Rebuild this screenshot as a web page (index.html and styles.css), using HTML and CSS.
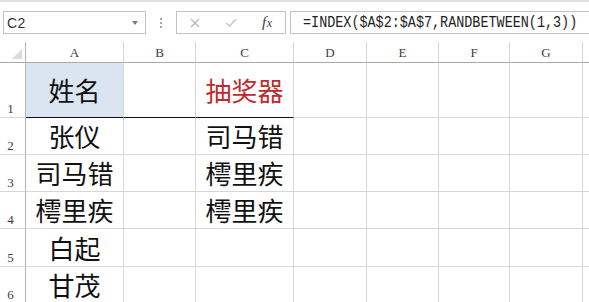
FILE: index.html
```html
<!DOCTYPE html>
<html lang="zh">
<head>
<meta charset="utf-8">
<title>Excel</title>
<link rel="stylesheet" href="styles.css">
</head>
<body>
<div class="app">
  <div class="topline"></div>
  <div class="fbar">
    <div class="namebox">
      <span class="name">C2</span>
      <span class="caret"></span>
    </div>
    <div class="grip"><i></i><i></i><i></i></div>
    <div class="fxbtns">
      <span class="btn">
        <svg width="10" height="10" viewBox="0 0 10 10"><path d="M1 1L9 9M9 1L1 9" stroke="#b9b9b9" stroke-width="1.4" fill="none"/></svg>
      </span>
      <span class="btn">
        <svg width="12" height="9" viewBox="0 0 12 9"><path d="M1 5L4.5 8L11 1" stroke="#c9c9c9" stroke-width="1.6" fill="none"/></svg>
      </span>
      <span class="btn fx"><span class="f">f</span><span class="x">x</span></span>
    </div>
    <div class="formula"><span class="ftext">=INDEX($A$2:$A$7,RANDBETWEEN(1,3))</span></div>
  </div>

  <div class="sheet">
    <div class="corner"><svg width="10" height="10" viewBox="0 0 10 10"><path d="M10 0L10 10L0 10Z" fill="#dcdcdc"/></svg></div>
    <div class="colh">A</div><div class="colh">B</div><div class="colh">C</div><div class="colh">D</div><div class="colh">E</div><div class="colh">F</div><div class="colh">G</div><div class="colh last"></div>

    <div class="rowh">1</div>
    <div class="cell head-a thick">姓名</div><div class="cell thick"></div><div class="cell thick red">抽奖器</div><div class="cell"></div><div class="cell"></div><div class="cell"></div><div class="cell"></div><div class="cell last"></div>

    <div class="rowh">2</div>
    <div class="cell">张仪</div><div class="cell"></div><div class="cell">司马错</div><div class="cell"></div><div class="cell"></div><div class="cell"></div><div class="cell"></div><div class="cell last"></div>

    <div class="rowh">3</div>
    <div class="cell">司马错</div><div class="cell"></div><div class="cell">樗里疾</div><div class="cell"></div><div class="cell"></div><div class="cell"></div><div class="cell"></div><div class="cell last"></div>

    <div class="rowh">4</div>
    <div class="cell">樗里疾</div><div class="cell"></div><div class="cell">樗里疾</div><div class="cell"></div><div class="cell"></div><div class="cell"></div><div class="cell"></div><div class="cell last"></div>

    <div class="rowh">5</div>
    <div class="cell">白起</div><div class="cell"></div><div class="cell"></div><div class="cell"></div><div class="cell"></div><div class="cell"></div><div class="cell"></div><div class="cell last"></div>

    <div class="rowh">6</div>
    <div class="cell">甘茂</div><div class="cell"></div><div class="cell"></div><div class="cell"></div><div class="cell"></div><div class="cell"></div><div class="cell"></div><div class="cell last"></div>
  </div>
</div>
</body>
</html>
```

FILE: styles.css
```css
* { box-sizing: border-box; }
html, body {
  margin: 0;
  padding: 0;
  background: #ffffff;
  overflow: hidden;
}
.app {
  width: 589px;
  height: 302px;
  overflow: hidden;
}
.topline {
  height: 2px;
  background: #e0e0e0;
}
.fbar {
  display: flex;
  align-items: center;
  margin-top: 9px;
  height: 23px;
}
.namebox {
  margin-left: 3px;
  width: 143px;
  height: 23px;
  border: 1px solid #c3c3c3;
  display: flex;
  align-items: center;
  justify-content: space-between;
  padding: 0 7px 0 3px;
}
.name {
  font-family: "Liberation Sans", Arial, sans-serif;
  font-size: 14px;
  color: #333;
  letter-spacing: 0.5px;
}
.caret {
  width: 0;
  height: 0;
  border-left: 3.5px solid transparent;
  border-right: 3.5px solid transparent;
  border-top: 4px solid #7a7a7a;
}
.grip {
  margin: 0 14px;
  width: 2px;
  display: flex;
  flex-direction: column;
  gap: 2px;
}
.grip i {
  display: block;
  width: 2px;
  height: 2px;
  background: #a8a8a8;
}
.fxbtns {
  width: 110px;
  height: 23px;
  border: 1px solid #c3c3c3;
  display: flex;
  align-items: center;
}
.btn {
  flex: 1;
  display: flex;
  align-items: center;
  justify-content: center;
}
.fx {
  font-family: "Liberation Serif", "Times New Roman", serif;
  font-style: italic;
  color: #3a3a3a;
  align-items: baseline;
}
.fx .f { font-size: 15px; }
.fx .x { font-size: 12px; margin-left: 0.5px; }
.formula {
  margin-left: 4px;
  margin-right: -10px;
  flex: 1;
  height: 23px;
  border: 1px solid #c3c3c3;
  display: flex;
  align-items: center;
  padding-left: 12px;
  overflow: hidden;
}
.ftext {
  display: inline-block;
  font-family: "Liberation Mono", "Courier New", monospace;
  font-size: 16px;
  color: #222;
  white-space: nowrap;
  transform: scaleX(0.84);
  transform-origin: left center;
}
.sheet {
  margin-top: 8px;
  display: grid;
  grid-template-columns: 26px 98px 72px 98px 73px 72px 71px 73px 1fr;
  grid-template-rows: 21px 55px 37px 37px 37px 38px 37px;
}
.corner {
  border-right: 1px solid #b5b5b5;
  border-bottom: 1px solid #a9a9a9;
  display: flex;
  align-items: flex-end;
  justify-content: flex-end;
  padding: 0 3px 3px 0;
}
.colh {
  border-right: 1px solid #d6d6d6;
  border-bottom: 1px solid #a9a9a9;
  display: flex;
  align-items: center;
  justify-content: center;
  font-family: "Liberation Serif", "Times New Roman", serif;
  font-size: 13px;
  color: #3c3c3c;
  padding-top: 1px;
}
.rowh {
  border-right: 1px solid #b5b5b5;
  border-bottom: 1px solid #d6d6d6;
  display: flex;
  align-items: flex-end;
  justify-content: center;
  padding: 0 4px 1px 0;
  font-family: "Liberation Serif", "Times New Roman", serif;
  font-size: 13px;
  line-height: 15px;
  color: #3c3c3c;
}
.cell {
  border-right: 1px solid #d6d6d6;
  border-bottom: 1px solid #d6d6d6;
  display: flex;
  align-items: center;
  justify-content: center;
  font-family: "Noto Sans CJK SC", "Noto Sans", sans-serif;
  font-size: 26px;
  font-weight: 400;
  line-height: 30px;
  color: #111;
  white-space: nowrap;
}
.last { border-right: none; }
.head-a { background: #dbe5f1; }
.thick { border-bottom-color: #111; }
.red { color: #bf2a2c; }
```
